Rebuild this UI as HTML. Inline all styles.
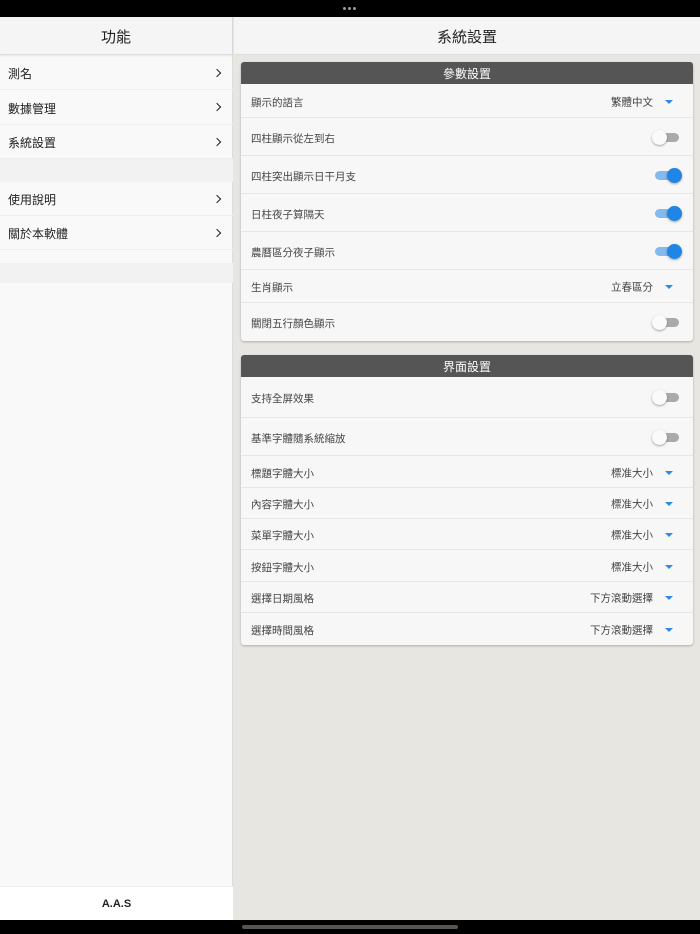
<!DOCTYPE html>
<html><head><meta charset="utf-8"><style>
*{margin:0;padding:0;box-sizing:border-box}
body{width:700px;height:934px;position:relative;overflow:hidden;background:#e8e6e1;font-family:"Liberation Sans","Noto Sans CJK TC",sans-serif;color:#333}
.a{position:absolute}
.top{left:0;top:0;width:700px;height:17px;background:#000}
.dots{left:343px;top:7px;width:16px;height:3px;z-index:2}
.dots i{float:left;width:3px;height:3px;border-radius:50%;background:#999;margin-right:2px}
.bot{left:0;top:920px;width:700px;height:14px;background:#000}
.home{left:242px;top:925px;width:216px;height:4px;border-radius:2px;background:#555}
.left{left:0;top:17px;width:233px;height:903px;background:#f9f9f9;border-right:1px solid #ddd}
.hdr{height:38px;background:#f5f5f5;border-bottom:1px solid #ddd;box-shadow:0 1px 2px rgba(0,0,0,.08);display:flex;align-items:center;justify-content:center;font-size:15px;color:#222;padding-top:2px}
.li{position:absolute;left:0;width:233px;border-bottom:1px solid #eee;font-size:12px;padding-left:8px;padding-top:2px;color:#222;display:flex;align-items:center}
.li b{position:absolute;right:13px;top:50%;width:6px;height:6px;margin-top:-3px;border-top:1.6px solid #222;border-right:1.6px solid #222;transform:rotate(45deg)}
.gap{position:absolute;left:0;width:233px;background:#f2f2f2}
.foot{position:absolute;left:0;top:869px;width:233px;height:34px;background:#fff;display:flex;align-items:center;justify-content:center;font-weight:bold;font-size:11px;color:#222;border-top:1px solid #eee}
.rh{left:234px;top:17px;width:466px;height:38px;background:#f5f5f5;border-bottom:1px solid #ddd;display:flex;align-items:center;justify-content:center;font-size:15px;color:#222;padding-top:2px}
.card{left:241px;width:452px;background:#f7f7f7;border-radius:3px;box-shadow:0 1px 2px rgba(0,0,0,.25);overflow:hidden}
.ch{height:22px;background:#555;color:#fff;display:flex;align-items:center;justify-content:center;font-size:12px;padding-top:1px}
.r{position:relative;border-bottom:1px solid #e6e6e6;font-size:10.5px;color:#444;padding-left:10px;padding-top:3px;display:flex;align-items:center}
.r:last-child{border-bottom:none}
.v{position:absolute;right:40px;top:50%;transform:translateY(-50%);margin-top:1px}
.tri{position:absolute;right:20px;top:50%;margin-top:-1px;width:0;height:0;border-left:4px solid transparent;border-right:4px solid transparent;border-top:4px solid #2a8ae6}
.sw{position:absolute;right:14px;top:50%;margin-top:-4px;width:24px;height:9px;border-radius:5px;background:#aaa}
.sw:after{content:"";position:absolute;left:-3px;top:-3px;width:15px;height:15px;border-radius:50%;background:#fafafa;box-shadow:0 1px 2px rgba(0,0,0,.35)}
.sw.on{background:#84b9ee}
.sw.on:after{left:12px;background:#1f85e6}
</style></head><body>
<div class="a top"></div><div class="a dots"><i></i><i></i><i></i></div>
<div class="a left">
<div class="hdr">功能</div>
<div class="li" style="top:39px;height:34px">測名<b></b></div>
<div class="li" style="top:73px;height:35px">數據管理<b></b></div>
<div class="li" style="top:108px;height:34px">系統設置<b></b></div>
<div class="gap" style="top:142px;height:23px"></div>
<div class="li" style="top:165px;height:34px">使用說明<b></b></div>
<div class="li" style="top:199px;height:34px">關於本軟體<b></b></div>
<div class="gap" style="top:246px;height:20px"></div>
<div class="foot">A.A.S</div>
</div>
<div class="a rh">系統設置</div>
<div class="a card" style="top:62px;height:279px">
<div class="ch">參數設置</div>
<div class="r" style="height:34px">顯示的語言<span class="v">繁體中文</span><i class="tri"></i></div>
<div class="r" style="height:38px">四柱顯示從左到右<i class="sw"></i></div>
<div class="r" style="height:38px">四柱突出顯示日干月支<i class="sw on"></i></div>
<div class="r" style="height:38px">日柱夜子算隔天<i class="sw on"></i></div>
<div class="r" style="height:38px">農曆區分夜子顯示<i class="sw on"></i></div>
<div class="r" style="height:33px">生肖顯示<span class="v">立春區分</span><i class="tri"></i></div>
<div class="r" style="height:38px">關閉五行顏色顯示<i class="sw"></i></div>
</div>
<div class="a card" style="top:355px;height:290px">
<div class="ch">界面設置</div>
<div class="r" style="height:41px">支持全屏效果<i class="sw"></i></div>
<div class="r" style="height:38px">基準字體隨系統縮放<i class="sw"></i></div>
<div class="r" style="height:32px">標題字體大小<span class="v">標准大小</span><i class="tri"></i></div>
<div class="r" style="height:31px">內容字體大小<span class="v">標准大小</span><i class="tri"></i></div>
<div class="r" style="height:31px">菜單字體大小<span class="v">標准大小</span><i class="tri"></i></div>
<div class="r" style="height:32px">按鈕字體大小<span class="v">標准大小</span><i class="tri"></i></div>
<div class="r" style="height:31px">選擇日期風格<span class="v">下方滾動選擇</span><i class="tri"></i></div>
<div class="r" style="height:32px">選擇時間風格<span class="v">下方滾動選擇</span><i class="tri"></i></div>
</div>
<div class="a bot"></div><div class="a home"></div>
</body></html>
